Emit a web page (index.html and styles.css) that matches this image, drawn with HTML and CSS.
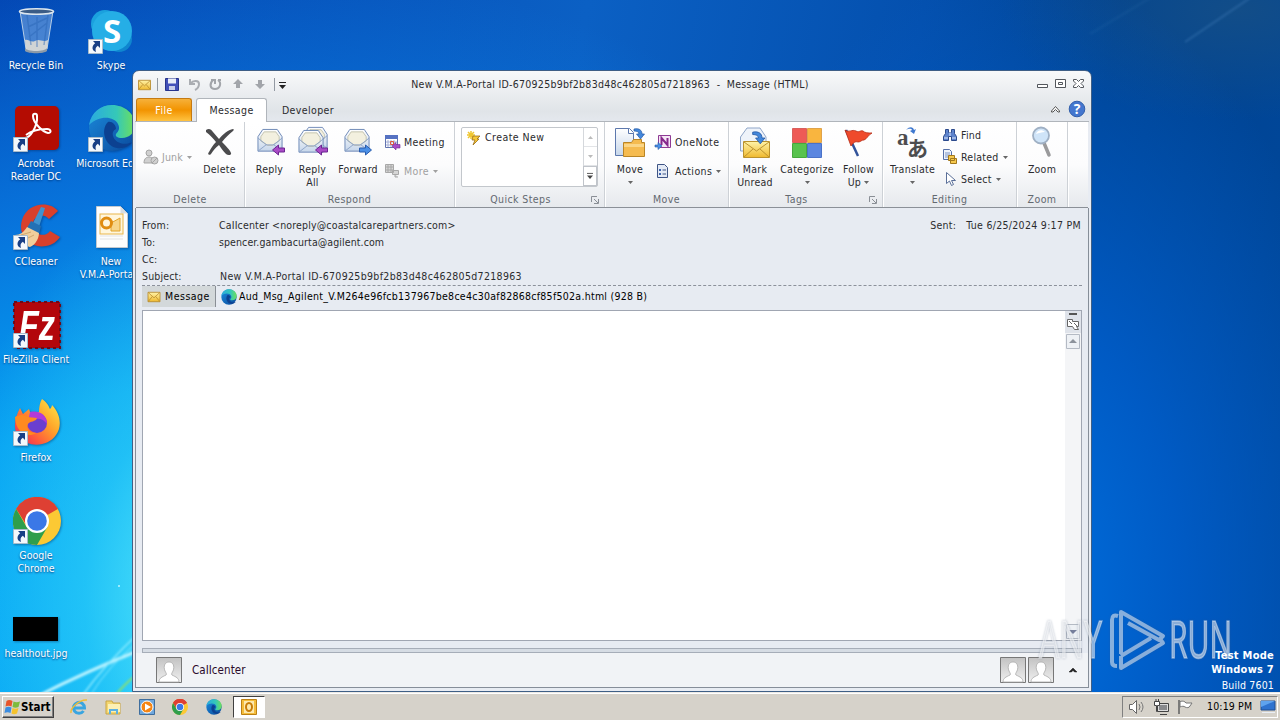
FILE: index.html
```
<!DOCTYPE html>
<html lang="en">
<head>
  <meta charset="UTF-8">
  <meta name="viewport" content="width=device-width, initial-scale=1.0">
  <title>New V.M.A-Portal - Message (HTML)</title>
  <link rel="stylesheet" href="styles.css">
</head>
<body>
  <!-- shared icons -->
  <svg class="sprite" width="0" height="0">
    <defs>
      <linearGradient id="gEdge" x1="0" y1="0" x2="1" y2="0"><stop offset="0" stop-color="#2aa9e0"/><stop offset=".6" stop-color="#35c8b8"/><stop offset="1" stop-color="#6fe05a"/></linearGradient>
      <linearGradient id="gEdge2" x1="0" y1="0" x2="1" y2="1"><stop offset="0" stop-color="#1b8bdc"/><stop offset="1" stop-color="#0a4a9c"/></linearGradient>
      <linearGradient id="gFox" x1="1" y1="0" x2="0" y2="1"><stop offset="0" stop-color="#fff04a"/><stop offset=".4" stop-color="#ffa52a"/><stop offset=".7" stop-color="#ff5a3c"/><stop offset="1" stop-color="#e0206a"/></linearGradient>
      <linearGradient id="gEnv" x1="0" y1="0" x2="0" y2="1"><stop offset="0" stop-color="#fff3a8"/><stop offset="1" stop-color="#efb92e"/></linearGradient>
      <linearGradient id="gPaper" x1="0" y1="0" x2="0" y2="1"><stop offset="0" stop-color="#ffffff"/><stop offset="1" stop-color="#c6d6ea"/></linearGradient>
      <linearGradient id="gGrey" x1="0" y1="0" x2="0" y2="1"><stop offset="0" stop-color="#c2c2c2"/><stop offset="1" stop-color="#f0f0f0"/></linearGradient>
    </defs>
    <symbol id="edge" viewBox="0 0 48 48">
      <circle cx="24" cy="24" r="23" fill="url(#gEdge2)"/>
      <path d="M1 21C3 8 13 1 24 1c13 0 23 9 23 20 0 8-6 13-13 13-5 0-7-2-6-4 3-3 4-6 2-10C26 12 11 11 1 21z" fill="url(#gEdge)"/>
      <path d="M20 18c-8 8-3 24 9 26 7 1 12-2 16-6-9 4-18 1-20-6-1-4 1-6 3-7 0-4-4-8-8-7z" fill="#0c4191"/>
    </symbol>
    <symbol id="chrome" viewBox="0 0 48 48">
      <circle cx="24" cy="24" r="24" fill="#fcc934"/>
      <path d="M24 24L3.200 12A24 24 0 0 1 44.800 12z" fill="#de4033"/>
      <path d="M24 12h20.800A24 24 0 0 0 3.200 12L14 29z" fill="#de4033"/>
      <path d="M3.200 12A24 24 0 0 0 24 48l10.400-18L24 24l-10.400 6z" fill="#2f9e4c"/>
      <circle cx="24" cy="24" r="12" fill="#fff"/><circle cx="24" cy="24" r="9.800" fill="#3b78e7"/>
    </symbol>
    <symbol id="shortcut" viewBox="0 0 15 15">
      <path d="M.5.5h14v14H.5z" fill="#f4f8fc" stroke="#a9bccb"/>
      <path d="M5 2h7v7l-2.200-2.200C7.600 8.500 7 10 8 13 3.500 11.500 3.500 7 7.200 4.200z" fill="#183f85"/>
    </symbol>
    <symbol id="env" viewBox="0 0 16 14">
      <path d="M1 1.500h14v11H1z" fill="url(#gEnv)" stroke="#b78a2c"/>
      <path d="M1.500 2L8 8l6.500-6M1.500 12L6 6.500M14.500 12L10 6.500" fill="none" stroke="#b78a2c" stroke-width=".9"/>
    </symbol>
    <symbol id="openenv" viewBox="0 0 28 28">
      <path d="M1 9L6 1.500h15l5 7.500v15H1z" fill="url(#gPaper)" stroke="#6c87b5"/>
      <path d="M4 9l3.500-5h12L23 9v4.500L16 18h-5l-7-4.500z" fill="#f3f0df" stroke="#b9b79f" stroke-width=".8"/>
      <path d="M1 10.500l9 7h7l9-7M1 24l9-7M26 24l-9-7" fill="none" stroke="#8ea4c8"/>
    </symbol>
    <symbol id="arrowL" viewBox="0 0 14 12"><path d="M1 6l6-5v3h6v4H7v3z" fill="#a94bc6" stroke="#6d2792"/></symbol>
    <symbol id="arrowR" viewBox="0 0 14 12"><path d="M13 6L7 1v3H1v4h6v3z" fill="#4a8fe6" stroke="#2a5dae"/></symbol>
    <symbol id="person" viewBox="0 0 26 26">
      <path d="M.5.5h25v25H.5z" fill="url(#gGrey)" stroke="#777"/>
      <path d="M3 25c0-4 3-5 7-7 1-1 0-2-1-4C7 9 9 5 13 5s6 4 4 9c-1 2-2 3-1 4 4 2 7 3 7 7z" fill="#fff" stroke="#aaa" stroke-width=".8"/>
    </symbol>
    <symbol id="down" viewBox="0 0 5 3"><path d="M0 0h5L2.500 3z" fill="currentColor"/></symbol>
    <symbol id="launch" viewBox="0 0 8 8"><path d="M.5 6V.5H6M3 3l4 4M7.500 3v4.500H3" fill="none" stroke="#8a8f96"/></symbol>
    <symbol id="bluehook" viewBox="0 0 12 12"><path d="M1 1c5-1 8 1 8 5h2.500L7.500 11 3.500 6H6C6 4 4 3 1 3z" fill="#4388dc" stroke="#2458a4" stroke-width=".7"/></symbol>
  </svg>

  <div class="desktop">
    <svg class="rays" viewBox="0 0 1280 692">
      <defs><filter id="soft"><feGaussianBlur stdDeviation="1.200"/></filter></defs>
      <g fill="none" filter="url(#soft)">
        <path d="M38 696Q85 672 140 650" stroke="#b6f2ff" stroke-width="3"/>
        <path d="M82 696Q105 664 140 632" stroke="#8beaff" stroke-width="1.500"/>
        <path d="M90 696Q108 666 140 640" stroke="#8beaff" stroke-width="1"/>
        <path d="M115 696Q124 684 140 672" stroke="#8be070" stroke-width="2"/>
        <path d="M1185 42L1250 -2" stroke="#5b93cc" stroke-opacity=".3" stroke-width="2"/>
        <path d="M1090 34L1150 -2" stroke="#5b93cc" stroke-opacity=".08" stroke-width="3"/>
      </g>
      <circle cx="119" cy="586" r="1" fill="#bff6ff"/>
    </svg>

    <div class="icons">
      <div class="icon">
        <svg width="48" height="48" viewBox="0 0 48 48">
          <path d="M7 4l6 38c1 4 20 4 21 0l6-38z" fill="#a9cdf0" fill-opacity=".4" stroke="#b7cee6"/>
          <path d="M12 33l1 10c3 3 18 3 21 0l1-10c-5 3-9-2-13 1-4 2-7-2-10-1z" fill="#e9e2d6" fill-opacity=".85"/>
          <path d="M14 8l4 30M24 10v30M35 8l-4 30M15 20l19-9M16 30l18-14" stroke="#2764b4" stroke-opacity=".45" fill="none" stroke-width="1.500"/>
          <ellipse cx="23.500" cy="4.500" rx="17" ry="2.800" fill="#3b5c86" stroke="#dce6ee" stroke-width="1.600"/>
          <path d="M12 41c2 4 20 4 22 0v3c-3 3-19 3-22 0z" fill="#8c9aa8"/>
        </svg>
        <span>Recycle Bin</span>
      </div>
      <div class="icon">
        <svg width="48" height="48" viewBox="0 0 48 48">
          <circle cx="17" cy="17" r="14" fill="#1ba1de"/><circle cx="31" cy="32" r="13" fill="#0f86cf"/><circle cx="24" cy="24" r="20" fill="#25aee6"/>
          <text x="24" y="36" text-anchor="middle" class="logo skype">S</text>
          <use href="#shortcut" y="32" width="15" height="15"/>
        </svg>
        <span>Skype</span>
      </div>
      <div class="icon">
        <svg width="48" height="48" viewBox="0 0 48 48">
          <rect x="2" y="1" width="44" height="44" rx="5" fill="#b40c02"/>
          <path d="M12 33c5 0 13-12 12-22 0-3-4-3-4 0 0 7 10 16 15 17 4 0 3-4-1-4-7 0-16 2-21 6" fill="none" stroke="#fff" stroke-width="2"/>
          <use href="#shortcut" y="32" width="15" height="15"/>
        </svg>
        <span>Acrobat<br>Reader DC</span>
      </div>
      <div class="icon">
        <svg width="48" height="48" viewBox="0 0 48 48"><use href="#edge" y="-1" width="48" height="48"/><use href="#shortcut" y="32" width="15" height="15"/></svg>
        <span>Microsoft Edge</span>
      </div>
      <div class="icon">
        <svg width="48" height="48" viewBox="0 0 48 48">
          <path d="M45 8C36-3 14 0 9 17c-5 17 10 29 24 26 7-1 11-5 14-9l-10-6c-5 7-16 4-17-5-1-10 10-14 16-7z" fill="#d8402c"/>
          <path d="M28 4l4 1-6 19-7-2z" fill="#3f93cf"/><path d="M18 18l10 5-2 8-12-6z" fill="#2371b5"/>
          <path d="M14 24l12 6c0 7-6 14-10 14L2 32c5 0 9-3 12-8z" fill="#f0ce9b"/><path d="M8 32l10-3M11 37l10-5" stroke="#cfa66d"/>
          <use href="#shortcut" y="32" width="15" height="15"/>
        </svg>
        <span>CCleaner</span>
      </div>
      <div class="icon">
        <svg width="48" height="48" viewBox="0 0 48 48">
          <path d="M8.500 3.500h24l7 7v34h-31z" fill="#fdfdfd" stroke="#c3c9cf"/><path d="M32.500 3.500v7h7z" fill="#d8dde2"/>
          <rect x="12" y="11" width="23" height="20" fill="#fff6dd" stroke="#e9b64b"/><path d="M23 20l9-5v13h-9z" fill="#f7d58a" stroke="#e2a42c"/>
          <circle cx="18.500" cy="20" r="5" fill="none" stroke="#e08d12" stroke-width="3"/><path d="M12 33h23M12 36h23" stroke="#e3e3e3"/>
        </svg>
        <span>New<br>V.M.A-Porta...</span>
      </div>
      <div class="icon">
        <svg width="48" height="48" viewBox="0 0 48 48">
          <rect x="1" y="1" width="46" height="46" fill="#b3060b"/><rect x="1" y="1" width="46" height="46" fill="none" stroke="#6d0a18" stroke-width="2" stroke-dasharray="3 3"/>
          <text x="6" y="39" class="logo fz" textLength="36" lengthAdjust="spacingAndGlyphs">Fz</text>
          <use href="#shortcut" y="32" width="15" height="15"/>
        </svg>
        <span>FileZilla Client</span>
      </div>
      <div class="icon"></div>
      <div class="icon">
        <svg width="48" height="48" viewBox="0 0 48 48">
          <path d="M29 0c6 4 7 8 8 10 2-2 2-4 2-4 9 9 10 22 4 30-8 12-28 13-37 2C0 32 1 20 7 9l3 6 6-5 2 6c3-3 6-3 8-3 0-5 1-10 3-13z" fill="url(#gFox)"/>
          <circle cx="24" cy="24" r="10" fill="#6a3fd0"/><path d="M17 13c8-2 17 2 17 12-3-5-8-6-11-5l-7-2z" fill="#b23ad8"/>
          <path d="M2 18c6-3 10-2 13 0l9 1c-1 4-7 3-9 6-2 4 1 9 8 9-9 6-21-2-21-16z" fill="#ff8a20"/>
          <use href="#shortcut" y="32" width="15" height="15"/>
        </svg>
        <span>Firefox</span>
      </div>
      <div class="icon"></div>
      <div class="icon">
        <svg width="48" height="48" viewBox="0 0 48 48"><use href="#chrome" width="48" height="48"/><use href="#shortcut" y="32" width="15" height="15"/></svg>
        <span>Google<br>Chrome</span>
      </div>
      <div class="icon"></div>
      <div class="icon">
        <svg width="48" height="48" viewBox="0 0 48 48"><path d="M0 22h45v24H0z" fill="#000"/></svg>
        <span>healthout.jpg</span>
      </div>
    </div>

    <div class="build"><b>Test Mode</b><b>Windows 7</b><span>Build 7601</span></div>

    <div class="window">
      <div class="titlebar">
        <div class="quick">
          <svg width="138" height="20" viewBox="0 0 138 20">
            <use href="#env" x="2" y="4" width="15" height="12"/>
            <path d="M22.500 3v13" stroke="#9299a2"/>
            <path d="M30.500 3.500h13v12h-13z" fill="#4250b8" stroke="#27348c"/><path d="M33 3.500h8v5h-8z" fill="#e9edf8"/><path d="M34 11h6v4h-6z" fill="#c7cdea"/>
            <path d="M55 4v5h5M55.500 8.500C58 5 64 5 64 9c0 3-2 5-4 6" fill="none" stroke="#aaadb2" stroke-width="2"/>
            <path d="M78 5c-4 4-3 9 2 9s7-6 3-9M76 5h4v4M83 5h3" fill="none" stroke="#a2a5aa" stroke-width="2"/>
            <path d="M103 4l5 5h-3v4h-4V9h-3z" fill="#a2a5aa"/><path d="M125 14l5-5h-3V5h-4v4h-3z" fill="#a2a5aa"/>
          </svg>
          <svg width="14" height="20" viewBox="0 0 14 20"><path d="M1.500 3v13" stroke="#9299a2"/><path d="M6 7.500h7" stroke="#222"/><path d="M6 10h7l-3.500 4z" fill="#222"/></svg>
        </div>
        <div class="title">New V.M.A-Portal ID-670925b9bf2b83d48c462805d7218963&nbsp; -&nbsp; Message (HTML)</div>
        <svg class="sysbtns" width="48" height="12" viewBox="0 0 48 12" fill="#fff" stroke="#52565c">
          <path d="M.5 5.500h10v3H.5z"/><path d="M18.500.5h10v8h-10zM21.500 3.500h4v2h-4z"/>
          <path d="M36.500.5h3l2 2 2-2h3V2L44 4.500 46.500 7v1.500h-3l-2-2-2 2h-3V7L39 4.500 36.500 2z"/>
        </svg>
      </div>

      <div class="tabs">
        <div class="tab file">File</div>
        <div class="tab active">Message</div>
        <div class="tab">Developer</div>
        <svg class="help" width="36" height="18" viewBox="0 0 36 18">
          <path d="M1.500 10l4-4.500 4 4.500v1H8L5.500 8.500 3 11H1.500z" fill="#fff" stroke="#555"/>
          <circle cx="27" cy="8" r="7.800" fill="#4477cf" stroke="#3360ac"/>
          <text x="27" y="13" text-anchor="middle" class="logo qmark">?</text>
        </svg>
      </div>

      <div class="ribbon">
        <div class="group g-delete">
          <div class="controls">
            <div class="small-col junk"><div class="small off">
              <svg width="16" height="16" viewBox="0 0 16 16" fill="#d0d0d0" stroke="#a5a5a5"><circle cx="6" cy="4" r="3"/><path d="M1 14c0-5 3-6 5-6s5 1 5 6z"/><circle cx="11.500" cy="11.500" r="3.500"/><path d="M9 14l5-5"/></svg>
              Junk<svg class="dd" width="5" height="3"><use href="#down"/></svg></div></div>
            <div class="big w46">
              <svg width="32" height="32" viewBox="0 0 32 32"><path d="M2 3c3-2 5-1 7 2l6 7C19 7 24 3 29 2c1 0 1 1 0 2-4 3-8 7-11 11 4 4 8 8 9 11 1 2-3 3-5 1-3-3-5-6-7-9-4 3-6 6-8 9-2 2-4 0-2-2 2-4 4-7 7-10C9 11 6 8 2 5z" fill="#4b4b4d"/></svg>
              <span>Delete</span></div>
          </div>
          <div class="caption">Delete</div>
        </div>
        <div class="group g-respond">
          <div class="controls">
            <div class="big w42"><svg width="32" height="32"><use href="#openenv" x="3" y="1" width="27" height="27"/><use href="#arrowL" x="17" y="17" width="15" height="12"/></svg><span>Reply</span></div>
            <div class="big w42"><svg width="32" height="32"><use href="#openenv" x="6" y="-1" width="26" height="26"/><use href="#openenv" x="1" y="2" width="27" height="27"/><use href="#arrowL" x="17" y="17" width="15" height="12"/></svg><span>Reply<br>All</span></div>
            <div class="big w48"><svg width="32" height="32"><use href="#openenv" x="2" y="1" width="27" height="27"/><use href="#arrowR" x="16" y="17" width="15" height="12"/></svg><span>Forward</span></div>
            <div class="small-col two">
              <div class="small"><svg width="17" height="16" viewBox="0 0 17 16"><path d="M1.500 2.500h12v11h-12z" fill="#fff" stroke="#6173b0"/><path d="M1 1h13v4H1z" fill="#5672c2"/><path d="M4 6v7M7 6v7M10 6v7M2 8h11M2 11h11" stroke="#a3aed6"/><path d="M6.500 7.500h3v3h-3z" fill="none" stroke="#e05a3c"/><path d="M8 12l4-3.500v2h4v3.500h-4v2z" fill="#a94bc6" stroke="#6d2792" stroke-width=".6"/></svg>Meeting</div>
              <div class="small off"><svg width="17" height="16" viewBox="0 0 17 16" fill="#d6d6d6" stroke="#a8a8a8"><path d="M1.500 1.500h8v8h-8zM4 1.500v8M7 1.500v8M1.500 4h8M1.500 7h8M8.500 7.500h6v4h-6zM11 11v3h3"/></svg>More<svg class="dd" width="5" height="3"><use href="#down"/></svg></div>
            </div>
          </div>
          <div class="caption">Respond</div>
        </div>
        <div class="group g-quick">
          <div class="controls">
            <div class="gallery">
              <div class="small"><svg width="16" height="16" viewBox="0 0 16 16"><path d="M5 1v8M1 5h8M2 2l6 6M8 2L2 8" stroke="#efc630" stroke-width="1.500"/><path d="M7 6h7l-3 3h2l-6 6 2-5H6z" fill="#f5c736" stroke="#9b6c14" stroke-width=".8"/></svg>Create New</div>
              <div class="spin">
                <div><svg width="5" height="3" viewBox="0 0 5 3"><path d="M0 3h5L2.500 0z" fill="#bbb"/></svg></div>
                <div><svg width="5" height="3" viewBox="0 0 5 3"><path d="M0 0h5L2.500 3z" fill="#bbb"/></svg></div>
                <div class="on"><svg width="6" height="6" viewBox="0 0 7 7"><path d="M0 .5h7" stroke="#444"/><path d="M0 3h7L3.500 7z" fill="#444"/></svg></div>
              </div>
            </div>
          </div>
          <div class="caption">Quick Steps<svg class="launch" width="8" height="8"><use href="#launch"/></svg></div>
        </div>
        <div class="group g-move">
          <div class="controls">
            <div class="big w42"><svg width="32" height="32" viewBox="0 0 32 32"><path d="M1.500 1.500h14l4 4v23h-18z" fill="url(#gPaper)" stroke="#5d78ad"/><path d="M14.500 1.500v5h5" fill="#fff" stroke="#5d78ad"/><path d="M9.500 15.500h8l2-3h8v3h3v14h-21z" fill="#f5bb50" stroke="#b98526"/><path d="M10 17h20v3H10z" fill="#fbd687"/><use href="#bluehook" x="19" y="1" width="12" height="12"/></svg><span>Move</span><svg class="dd" width="5" height="3"><use href="#down"/></svg></div>
            <div class="small-col two">
              <div class="small"><svg width="17" height="16" viewBox="0 0 17 16"><path d="M3.500 1.500h12v12h-12z" fill="#f5e6f5" stroke="#8e3b94"/><path d="M6.500 11V4l6 7V4" fill="none" stroke="#86288c" stroke-width="2"/><path d="M0 11h3V8.500l4 3.500-4 3.500V13H0z" fill="#4a8fe6" stroke="#2458a4" stroke-width=".6"/></svg>OneNote</div>
              <div class="small"><svg width="17" height="16" viewBox="0 0 17 16"><path d="M2.500 1.500h7l3 3v10h-10z" fill="#e4eaf5" stroke="#3e5485"/><path d="M4 6h2v2H4zM4 10h2v2H4z" fill="#3f65b0"/><path d="M7.500 7H11M7.500 11H11" stroke="#3e5485"/></svg>Actions<svg class="dd" width="5" height="3"><use href="#down"/></svg></div>
            </div>
          </div>
          <div class="caption">Move</div>
        </div>
        <div class="group g-tags">
          <div class="controls">
            <div class="big w48"><svg width="32" height="32" viewBox="0 0 32 32"><path d="M1.500 10L8 1h13l6 9v14H1.500z" fill="#eef3fa" stroke="#8fa6c8"/><path d="M4.500 14.500h26v16h-26z" fill="url(#gEnv)" stroke="#bb922e"/><path d="M5 15l12.500 9L30 15M5 30l9-8M30 30l-9-8" fill="none" stroke="#bb922e"/><use href="#bluehook" x="12" y="4" width="15" height="14"/></svg><span>Mark<br>Unread</span></div>
            <div class="big w56"><svg width="32" height="32" viewBox="0 0 32 32"><path d="M1.500 1.500h14v14h-14z" fill="#ee5a56" stroke="#d9605c"/><path d="M16.500 1.500h14v14h-14z" fill="#f9b53f" stroke="#e0a34a"/><path d="M1.500 16.500h14v14h-14z" fill="#58c34e" stroke="#46a83e"/><path d="M16.500 16.500h14v14h-14z" fill="#5b86e0" stroke="#4a72c8"/></svg><span>Categorize</span><svg class="dd" width="5" height="3"><use href="#down"/></svg></div>
            <div class="big w46"><svg width="32" height="32" viewBox="0 0 32 32"><path d="M3 3l12 26" stroke="#32539a" stroke-width="2.500"/><path d="M2 3c4 3 7-1 11 1 3 2 4-1 7 0 2 2 5 2 9 2-4 2-5 6-8 7-3 0-3 2-6 2-3-1-5 1-7 4z" fill="#ef4a2b" stroke="#b62b14" stroke-width=".8"/></svg><span>Follow<br>Up <svg class="dd in" width="5" height="3"><use href="#down"/></svg></span></div>
          </div>
          <div class="caption">Tags<svg class="launch" width="8" height="8"><use href="#launch"/></svg></div>
        </div>
        <div class="group g-edit">
          <div class="controls">
            <div class="big w52"><svg width="32" height="32" viewBox="0 0 32 32"><text x="0" y="18" class="tr-a">a</text><text x="10" y="29" class="tr-b">あ</text><path d="M9 3c4-4 7-3 8 0l2-1-2 5-4-3 2-1c-1-2-4-1-6 0z" fill="#3f79cf"/></svg><span>Translate</span><svg class="dd" width="5" height="3"><use href="#down"/></svg></div>
            <div class="small-col three">
              <div class="small"><svg width="16" height="16" viewBox="0 0 16 16" fill="#5d83cc" stroke="#2c4a8c"><path d="M3.500 2.500h3v3h3v-3h3v4l2 3v4h-5v-4h-3v4h-5v-4l2-3z"/><path d="M2 11h4M10 11h4M8 5v4" stroke="#dfe8fa"/></svg>Find</div>
              <div class="small"><svg width="16" height="16" viewBox="0 0 16 16"><path d="M1.500.5h6l2 2v8h-8z" fill="#eef3fb" stroke="#5670a8"/><path d="M3 4h5M3 6h5M3 8h5" stroke="#7b93c4"/><path d="M6.500 6.500h6v5h-6zM8.500 9.500h6v5h-6z" fill="#f6c94e" stroke="#a3781c"/></svg>Related<svg class="dd" width="5" height="3"><use href="#down"/></svg></div>
              <div class="small"><svg width="16" height="16" viewBox="0 0 16 16"><path d="M4.500 1.500v11l3-2.500 2 4.500 2-1-2-4h4z" fill="#fff" stroke="#5a6f98"/></svg>Select<svg class="dd" width="5" height="3"><use href="#down"/></svg></div>
            </div>
          </div>
          <div class="caption">Editing</div>
        </div>
        <div class="group g-zoom">
          <div class="controls">
            <div class="big w46"><svg width="32" height="32" viewBox="0 0 32 32"><path d="M18 16l5 12" stroke="#9a9a9c" stroke-width="3.500" stroke-linecap="round"/><circle cx="15" cy="8.500" r="8" fill="#cfe4f8" stroke="#9fb0c4" stroke-width="1.800"/><path d="M10 7c1-4 6-5 9-2-3 0-6 1-9 2z" fill="#fff"/></svg><span>Zoom</span></div>
          </div>
          <div class="caption">Zoom</div>
        </div>
      </div>

      <div class="mail">
        <div class="header">
          <div class="row"><label>From:</label><span class="w-addr">CaIIcenter &lt;noreply@coastalcarepartners.com&gt;</span><span class="sent">Sent:&nbsp;&nbsp; Tue 6/25/2024 9:17 PM</span></div>
          <div class="row"><label>To:</label><span class="w-to">spencer.gambacurta@agilent.com</span></div>
          <div class="row"><label>Cc:</label></div>
          <div class="row"><label>Subject:</label><span class="w-subj">New V.M.A-Portal ID-670925b9bf2b83d48c462805d7218963</span></div>
        </div>
        <div class="attach">
          <div class="msgtab"><svg width="14" height="12"><use href="#env"/></svg>Message</div>
          <svg width="16" height="16"><use href="#edge"/></svg>
          <span class="fname">Aud_Msg_Agilent_V.M264e96fcb137967be8ce4c30af82868cf85f502a.html (928 B)</span>
        </div>
        <div class="body">
          <div class="scroll">
            <svg width="16" height="38" viewBox="0 0 16 38"><path d="M4 3h8" stroke="#555" stroke-width="2"/><path d="M2.500 8.500h5v2h6v5h-2l2 3h-4l-2-3h-5zM4 10l3 3M9 12l3 3" fill="#fff" stroke="#666"/><path d="M1.500 23.500h13v14h-13z" fill="#eef1f5" stroke="#b4bac4"/><path d="M4 32h8l-4-4z" fill="#8d939c"/></svg>
            <svg width="16" height="17" viewBox="0 0 16 17"><path d="M1.500 1.500h13v14h-13z" fill="#eef1f5" stroke="#b4bac4"/><path d="M4 7h8l-4 4z" fill="#777f9c"/></svg>
          </div>
        </div>
        <div class="splitter"></div>
        <div class="people">
          <svg width="26" height="26"><use href="#person"/></svg>
          <span>CaIIcenter</span>
          <svg class="right" width="26" height="26"><use href="#person"/></svg>
          <svg width="26" height="26"><use href="#person"/></svg>
          <svg class="up" width="8" height="6" viewBox="0 0 8 6"><path d="M0 5l4-4 4 4H5.500L4 3.500 2.500 5z" fill="#222" stroke="#222" stroke-width=".5"/></svg>
        </div>
      </div>
    </div>

    <svg class="watermark" width="196" height="64" viewBox="0 0 196 64">
      <text x="3" y="50" textLength="63" lengthAdjust="spacingAndGlyphs">ANY</text>
      <text x="133" y="50" textLength="63" lengthAdjust="spacingAndGlyphs">RUN</text>
      <path d="M82 8Q76 6 76 12v42q0 4 5 4M85 46V4l42 24-4 4-31-17M85 48v12l42-25-3-4M85 48l30-18" fill="none" stroke="#fff" stroke-opacity=".5" stroke-width="4" stroke-linejoin="round"/>
    </svg>
  </div>

  <div class="taskbar">
    <div class="start">
      <svg width="17" height="16" viewBox="0 0 16 16"><path d="M2 2c2-1.500 4-1 6 0L7 7.500C5 6.500 3 6.500 1 7.500z" fill="#e8552a"/><path d="M9 2.500c2 1 4 1 6.500 0L14 8c-2 1-4 1-6 0z" fill="#7dbb3c"/><path d="M1 8.500c2-1 4-1 6 0L6 14c-2-1-4-1-6 0z" fill="#3c8de0"/><path d="M8 9c2 1 4 1 6 0l-1.500 5.500c-2 1-4 1-5.500 0z" fill="#f5c32c"/></svg>
      Start
    </div>
    <div class="launchers">
      <svg width="18" height="18" viewBox="0 0 18 18"><path d="M4 10h10.500A5.500 5.500 0 1 0 13.500 13" fill="none" stroke="#39a5e0" stroke-width="3"/><path d="M1 15C0 10 10 1 17 2" fill="none" stroke="#f0bd35" stroke-width="1.500"/></svg>
      <svg width="18" height="18" viewBox="0 0 18 18"><path d="M2 3h6l1 2h7v11H2z" fill="#f3d671" stroke="#caa543"/><path d="M4 6h12v8H4z" fill="#fdf0b4"/><path d="M5 16v-5h9v5h-2v-3H7v3z" fill="#5fb1e0"/></svg>
      <svg width="18" height="18" viewBox="0 0 18 18"><path d="M1.500 1.500h15v15h-15z" fill="#6ea7dd" stroke="#3f6e9e"/><circle cx="9" cy="9" r="6" fill="#f58514" stroke="#fff"/><path d="M7 5.500l6 3.500-6 3.500z" fill="#fff"/></svg>
      <svg width="16" height="16"><use href="#chrome"/></svg>
      <svg width="16" height="16"><use href="#edge"/></svg>
    </div>
    <div class="running"><svg width="18" height="18" viewBox="0 0 18 18"><path d="M1.500 1.500h15v15h-15z" fill="#f5bd3c" stroke="#bd8012"/><path d="M4 3h10v12H4z" fill="#fde9ae"/><ellipse cx="9" cy="9" rx="3" ry="4" fill="none" stroke="#c77c0a" stroke-width="2"/></svg></div>
    <div class="tray">
      <svg width="66" height="18" viewBox="0 0 66 18">
        <path d="M.5 6.500h3l4-4v13l-4-4h-3z" fill="#fff" stroke="#666"/><path d="M10 6q2 3 0 6M12 4q4 5 0 10" fill="none" stroke="#777"/>
        <path d="M28.500 5.500h11v8h-11zM31 16.500h7" fill="#ddd" stroke="#444"/><path d="M30 7h8v5h-8z" fill="#88898c"/><path d="M25.500 3.500h5v4h-2v6h-1v-6h-2zM27 1v3M29.500 1v3" fill="#fff" stroke="#444"/>
        <path d="M50 2v14" stroke="#666" stroke-width="1.600"/><path d="M51 3.500c3-1 5 0 6 1.500h6l-2 3c-1 2-3 2-5 1-1-1-3-1-5 0z" fill="#fff" stroke="#777"/>
      </svg>
      <span>10:19 PM</span>
      <svg width="16" height="16" viewBox="0 0 16 16"><path d="M1 2h14v9H1z" fill="#2f73cf" stroke="#234f8e"/><path d="M1 2h14L1 8z" fill="#5fa3ee"/><path d="M2 13.500h13" stroke="#e9eef5"/></svg>
    </div>
  </div>
</body>
</html>
```
FILE: styles.css
```
* { box-sizing: border-box; }
body {
  margin: 0; width: 1280px; height: 720px; overflow: hidden;
  display: flex; flex-direction: column;
  font-family: "DejaVu Sans Condensed", "DejaVu Sans", "Noto Sans CJK JP", sans-serif;
  font-size: 10.5px; line-height: 13px; letter-spacing: .15px; color: #2b2b2e;
}
svg { display: block; flex: none; overflow: visible; }
.sprite { position: absolute; }

/* desktop */
.desktop {
  position: relative; height: 692px; flex: none; overflow: hidden;
  background:
    radial-gradient(ellipse 290px 420px at 230px 600px, rgba(110,245,250,.95), rgba(60,220,248,.5) 50%, rgba(20,190,245,0) 100%),
    radial-gradient(ellipse 860px 680px at 220px 640px, #06b0fa 0%, #04a0f2 38%, rgba(8,120,224,.9) 66%, rgba(5,90,200,0) 100%),
    radial-gradient(ellipse 360px 620px at 1020px 590px, #0070e0, rgba(0,96,208,.8) 45%, rgba(0,80,180,0) 100%),
    radial-gradient(ellipse 240px 110px at 1240px 10px, #124d88, rgba(10,70,135,0)),
    linear-gradient(100deg, #0345b2 0%, #0b60c4 42%, #0450ae 66%, #004290 80%, #00489c 100%);
}
.rays { position: absolute; left: 0; top: 0; width: 1280px; height: 692px; }
.icons {
  position: relative; width: 150px; padding-top: 7px;
  display: grid; grid-template-columns: 75px 75px; grid-auto-rows: 98px;
}
.icon {
  display: flex; flex-direction: column; align-items: center; gap: 4px;
  color: #fff; text-align: center; white-space: nowrap; padding-right: 1px;
  text-shadow: 0 1px 2px #003a80; letter-spacing: 0;
}
.icon span { padding-right: 2px; }
.icons .icon:nth-child(n+3) svg { filter: drop-shadow(1px 1px 1px rgba(0,30,80,.4)); }
.logo { font-family: "Open Sans", sans-serif; font-weight: bold; fill: #fff; letter-spacing: 0; text-shadow: none; }
.skype { font-size: 33px; }
.fz { font: italic bold 43px "Liberation Sans", sans-serif; }
.qmark { font-size: 14px; }
.build {
  position: absolute; z-index: 3; right: 6px; bottom: -1px; color: #fff;
  display: flex; flex-direction: column; align-items: flex-end; line-height: 14px;
}
.build b { font-size: 11px; letter-spacing: .25px; }
.build span { line-height: 16px; }

/* outlook window */
.window {
  position: absolute; z-index: 1; left: 132px; top: 70px; width: 960px; height: 622px;
  border: 1px solid #3f5f86; border-radius: 7px 7px 0 0; padding: 2px;
  background: linear-gradient(#f8f9fa, #e0e4e8 40px, #e8ecf3 60px);
  display: flex; flex-direction: column;
}
.titlebar { height: 25px; flex: none; display: flex; align-items: center; padding: 0 4px 2px 0; }
.quick { display: flex; }
.title { flex: 1; text-align: center; padding-right: 104px; letter-spacing: .27px; white-space: nowrap; }
.tabs { height: 24px; flex: none; display: flex; border-bottom: 1px solid #b0b5bb; padding-left: 1px; }
.tab { width: 82px; text-align: center; line-height: 24px; letter-spacing: .4px; }
.tab.file {
  width: 56px; color: #fff; border: 1px solid #c57a12; border-bottom: 0; border-radius: 3px 3px 0 0;
  background: linear-gradient(#f6b13a, #f29300 50%, #ffc341); margin-right: 4px; line-height: 22px;
}
.tab.active {
  width: 71px; height: 24px; background: #fff; border: 1px solid #b0b5bb; border-bottom: 0; border-radius: 3px 3px 0 0; line-height: 22px;
}
.help { margin: 3px 3px 0 auto; }

.ribbon {
  height: 86px; flex: none; display: flex; margin: 0 1px;
  background: linear-gradient(#fff, #fcfcfd 50%, #e6e9ed); border-bottom: 1px solid #8b9097;
}
.group {
  flex: none; display: flex; flex-direction: column; border-right: 1px solid #cdd1d6;
  box-shadow: 1px 0 #fff;
}
.g-delete { width: 109px; }
.g-respond { width: 210px; }
.g-quick { width: 150px; }
.g-move { width: 124px; }
.g-tags { width: 154px; }
.g-edit { width: 134px; }
.g-zoom { width: 51px; }
.controls { height: 70px; display: flex; padding: 5px 0 0 2px; }
.caption { position: relative; text-align: center; color: #636970; line-height: 14px; letter-spacing: .4px; }
.launch { position: absolute; right: 5px; top: 4px; }
.g-quick .caption { padding-right: 18px; }
.g-tags .caption { padding-right: 18px; }
.big { display: flex; flex-direction: column; align-items: center; text-align: center; white-space: nowrap; }
.big > span { padding-top: 4px; }
.w42 { width: 46px; }
.w46 { width: 47px; }
.w48 { width: 48px; }
.w52 { width: 55px; }
.w56 { width: 56px; }
.g-respond .controls { padding-left: 3px; }
.g-respond .w42 { width: 43px; }
.g-zoom .w46 { width: 46px; }
.big { letter-spacing: .25px; }
.big .dd { margin-top: 5px; color: #666; }
.big .dd.in { display: inline-block; margin: 0 0 2px; }
.small { display: flex; align-items: center; gap: 3px; height: 22px; white-space: nowrap; }
.small .dd { color: #666; margin-left: 1px; }
.off, .off .dd { color: #a0a0a0; }
.junk { width: 58px; padding: 19px 0 0 5px; }
.two { padding: 7px 0 0 2px; }
.two .small { height: 29px; align-items: flex-start; line-height: 17px; gap: 3px; letter-spacing: .4px; }
.two .small .dd { margin-top: 7px; margin-left: 1px; }
.three { padding-left: 2px; margin-top: -3px; letter-spacing: .25px; }

.gallery {
  width: 137px; height: 60px; margin-left: 4px; display: flex; justify-content: space-between;
  border: 1px solid #c3c7cc; border-radius: 2px; background: #fff;
}
.gallery .small { height: 19px; padding-left: 4px; gap: 3px; letter-spacing: .45px; }
.spin { width: 14px; border-left: 1px solid #d5d8dc; display: flex; flex-direction: column; }
.spin div { flex: 1; display: flex; align-items: center; justify-content: center; border-bottom: 1px solid #e2e4e7; }
.spin .on { border: 1px solid #c0c4ca; margin-left: -1px; }

/* message */
.mail {
  flex: 1; display: flex; flex-direction: column; background: #e7ebf2;
  border: 1px solid #868e99; border-top: 0; padding: 9px 6px 0; margin-bottom: 1px;
}
.header { border-bottom: 1px dashed #8c919b; height: 69px; flex: none; }
.row { height: 17px; line-height: 17px; display: flex; }
.row label { width: 77px; }
.w-addr { letter-spacing: .16px; }
.w-to { letter-spacing: .1px; }
.w-subj { letter-spacing: .33px; padding-left: 1px; }
.sent { margin-left: auto; padding-right: 1px; letter-spacing: .3px; }
.attach { display: flex; align-items: center; height: 21px; flex: none; color: #000; }
.msgtab {
  width: 74px; height: 21px; display: flex; align-items: center; gap: 4px; padding-left: 5px;
  background: #d3d8da; border-right: 1px solid #8a8f96; margin-right: 5px; letter-spacing: .5px;
}
.fname { padding: 0 0 1px 2px; letter-spacing: .27px; }
.body {
  height: 331px; flex: none; margin-top: 3px; border: 1px solid #a0a6b2; background: #fff;
  display: flex; justify-content: flex-end;
}
.scroll { width: 16px; background: linear-gradient(#dfe3ea 22px, #f4f5f7 22px); display: flex; flex-direction: column; justify-content: space-between; }
.splitter { height: 5px; flex: none; margin-top: 7px; border: 1px solid #a6adb8; background: #d6dce4; }
.people {
  flex: 1; margin: 0 -6px; padding: 0 11px 0 20px; background: #f1f3f6;
  display: flex; align-items: center; gap: 2px; font-size: 11.5px; color: #2b0a2b;
}
.people span { padding-left: 8px; letter-spacing: .05px; }
.people .right { margin-left: auto; }
.people .up { margin-left: 13px; }

.watermark { position: absolute; z-index: 2; left: 1036px; top: 608px; filter: drop-shadow(0 0 1px rgba(70,90,120,.55)); }
.watermark text {
  font-family: "Open Sans", sans-serif; font-size: 51px; letter-spacing: 0;
  fill: #fff; fill-opacity: .5; stroke: #fff; stroke-opacity: .4; stroke-width: 1.5px;
}
.tr-a { font: bold 23px "Liberation Serif", serif; fill: #4c4c4e; }
.tr-b { font: bold 21px "Noto Sans CJK JP", sans-serif; fill: #4c4c4e; }

/* taskbar */
.taskbar {
  height: 28px; flex: none; display: flex; align-items: center; padding: 1px 2px 0;
  background: #d6d2ca; border-top: 1px solid #ece9e4; box-shadow: inset 0 1px #fff; color: #000;
}
.start {
  width: 52px; height: 22px; display: flex; align-items: center; padding-left: 1px;
  font-weight: bold; font-size: 11.5px; letter-spacing: 0;
  border: 1px solid #fff; border-right-color: #404040; border-bottom-color: #404040;
  box-shadow: inset -1px -1px #808080;
}
.launchers { display: flex; align-items: center; gap: 16px; margin-left: 16px; }
.launchers svg:last-child { margin-left: 2px; }
.running {
  width: 32px; height: 22px; margin-left: 11px; display: flex; align-items: center; justify-content: center;
  background: #fff; border: 1px solid #404040; border-right-color: #fff; border-bottom-color: #fff;
}
.tray {
  margin-left: auto; width: 156px; height: 22px; display: flex; align-items: center; padding-left: 6px;
  border: 1px solid #808080; border-right-color: #fff; border-bottom-color: #fff; padding-right: 1px;
}
.tray span { margin: 0 auto 1px 12px; }
```
